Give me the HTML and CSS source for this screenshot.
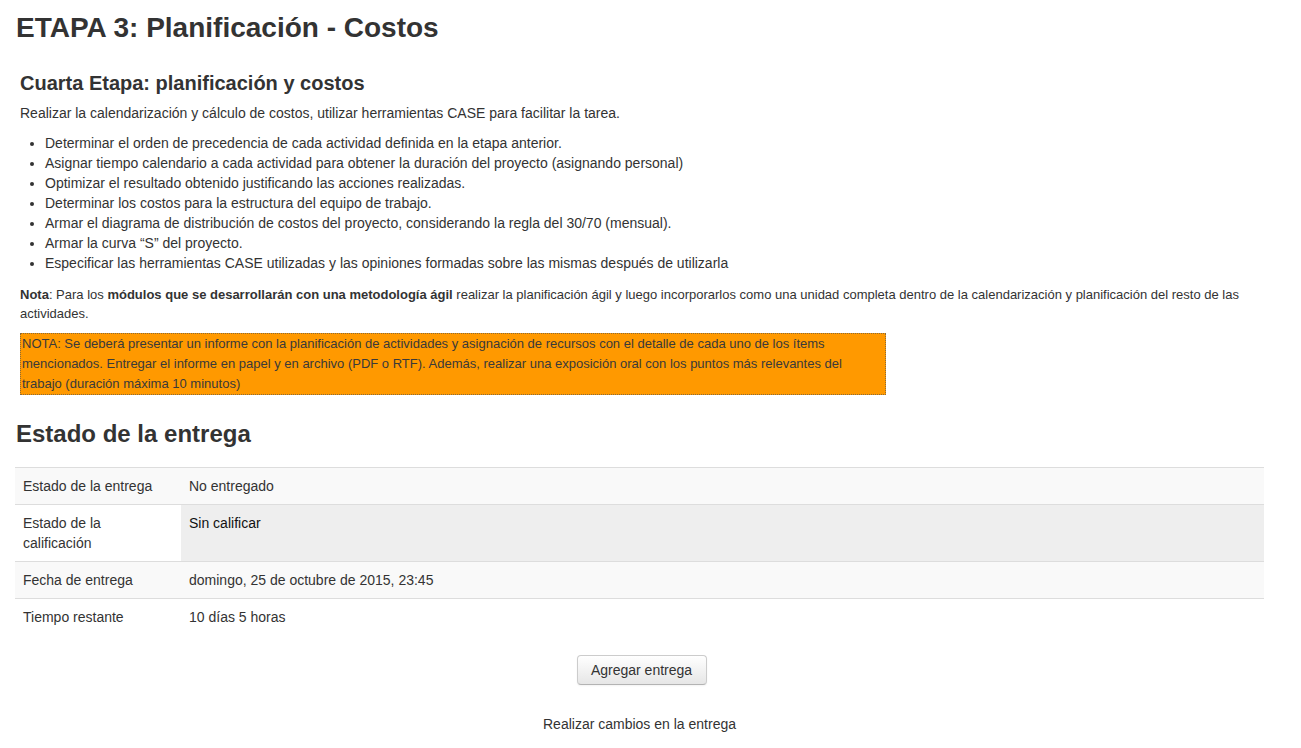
FILE: index.html
```html
<!DOCTYPE html>
<html lang="es">
<head>
<meta charset="utf-8">
<title>ETAPA 3: Planificación - Costos</title>
<link rel="stylesheet" href="styles.css">
</head>
<body>
<div class="page">
  <h2 class="main-title">ETAPA 3: Planificación - Costos</h2>
  <div class="intro">
    <h3 class="sub-title">Cuarta Etapa: planificación y costos</h3>
    <p class="text">Realizar la calendarización y cálculo de costos, utilizar herramientas CASE para facilitar la tarea.</p>
    <ul class="tasks">
      <li>Determinar el orden de precedencia de cada actividad definida en la etapa anterior.</li>
      <li>Asignar tiempo calendario a cada actividad para obtener la duración del proyecto (asignando personal)</li>
      <li>Optimizar el resultado obtenido justificando las acciones realizadas.</li>
      <li>Determinar los costos para la estructura del equipo de trabajo.</li>
      <li>Armar el diagrama de distribución de costos del proyecto, considerando la regla del 30/70 (mensual).</li>
      <li>Armar la curva “S” del proyecto.</li>
      <li>Especificar las herramientas CASE utilizadas y las opiniones formadas sobre las mismas después de utilizarla</li>
    </ul>
    <p class="note"><strong>Nota</strong>: Para los <strong>módulos que se desarrollarán con una metodología ágil</strong> realizar la planificación ágil y luego incorporarlos como una unidad completa dentro de la calendarización y planificación del resto de las actividades.</p>
    <div class="warning">NOTA: Se deberá presentar un informe con la planificación de actividades y asignación de recursos con el detalle de cada uno de los ítems mencionados. Entregar el informe en papel y en archivo (PDF o RTF). Además, realizar una exposición oral con los puntos más relevantes del trabajo (duración máxima 10 minutos)</div>
  </div>
  <div class="status">
    <h3 class="status-title">Estado de la entrega</h3>
    <table class="status-table">
      <tr class="odd"><td class="label">Estado de la entrega</td><td>No entregado</td></tr>
      <tr class="even"><td class="label">Estado de la calificación</td><td class="grade">Sin calificar</td></tr>
      <tr class="odd"><td class="label">Fecha de entrega</td><td>domingo, 25 de octubre de 2015, 23:45</td></tr>
      <tr class="even"><td class="label">Tiempo restante</td><td>10 días 5 horas</td></tr>
    </table>
    <div class="actions">
      <button class="btn" type="button">Agregar entrega</button>
      <p class="hint">Realizar cambios en la entrega</p>
    </div>
  </div>
</div>
</body>
</html>
```
FILE: styles.css
```css
* { box-sizing: border-box; }
html, body { margin: 0; padding: 0; background: #fff; }
body {
  font-family: "Liberation Sans", Arial, sans-serif;
  font-size: 14px;
  line-height: 20px;
  color: #333;
}
.page { padding: 0 16px 0 15px; }
.main-title {
  margin: 0;
  padding-top: 10px;
  padding-left: 1px;
  font-size: 28px;
  line-height: 36px;
  font-weight: bold;
  color: #333;
}
.intro { padding: 0 0 0 5px; }
.sub-title {
  margin: 25px 0 0;
  font-size: 20px;
  line-height: 24px;
  font-weight: bold;
}
.text { margin: 0; font-size: 14px; line-height: 20px; padding-top: 8px; }
.tasks { margin: 10px 0 10px 25px; padding: 0; font-size: 14px; line-height: 20px; }
.note { margin: 0; font-size: 13px; padding-top: 2px; line-height: 19px; }
.warning {
  margin-top: 10px;
  width: 866px;
  background: #ff9900;
  border: 1px dotted #8a6a3a;
  font-size: 13px;
  line-height: 20px;
  padding: 0 1px;
  color: #3a3a3a;
}
.status { width: 1249px; }
.status-title {
  margin: 24px 0 0 1px;
  font-size: 24px;
  line-height: 30px;
  font-weight: bold;
}
.status-table {
  margin-top: 18px;
  width: 100%;
  border-collapse: collapse;
  font-size: 14px;
}
.status-table td {
  padding: 8px;
  line-height: 20px;
  vertical-align: top;
  border-top: 1px solid #ddd;
}
.status-table td.label { width: 166px; }
.odd td { background: #f9f9f9; }
.even td { background: #fff; }
.even td.grade { background: #eee; color: #111; }
.actions { display: flex; flex-direction: column; align-items: center; padding-top: 20px; }
.btn {
  font-family: inherit;
  font-size: 14px;
  line-height: 20px;
  color: #333;
  padding: 4px 12px;
  margin-left: 4px;
  border: 1px solid #ccc;
  border-bottom-color: #b3b3b3;
  border-radius: 4px;
  background: linear-gradient(#fff, #e6e6e6);
  box-shadow: inset 0 1px 0 rgba(255,255,255,.2), 0 1px 2px rgba(0,0,0,.05);
  width: 130px;
  height: 30px;
}
.hint { margin: 29px 0 0; font-size: 14px; }
```
